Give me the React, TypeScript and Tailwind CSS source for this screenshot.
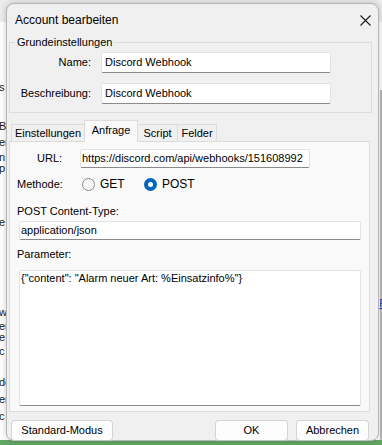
import React from "react";

const bgLetters = [
  { y: 82, t: "s" },
  { y: 121, t: "Bl" },
  { y: 137, t: "er" },
  { y: 152, t: "n" },
  { y: 163, t: "p" },
  { y: 217, t: "e" },
  { y: 307, t: "w" },
  { y: 321, t: "er" },
  { y: 332, t: "e" },
  { y: 346, t: "c" },
  { y: 377, t: "de" },
  { y: 394, t: "er" },
  { y: 411, t: "c" },
];

function Field({ value, className = "" }: { value: string; className?: string }) {
  return (
    <div
      className={`flex items-center bg-white border border-[#e3e3e3] border-b-[#8a8a8a] rounded-[2px] whitespace-nowrap overflow-hidden ${className}`}
    >
      {value}
    </div>
  );
}

function Btn({ label, className = "" }: { label: string; className?: string }) {
  return (
    <div
      className={`h-[21px] flex items-center justify-center bg-[#fdfdfd] border border-[#d3d3d3] border-b-[#c2c2c2] rounded-[4px] ${className}`}
    >
      {label}
    </div>
  );
}

export default function App() {
  const tabs = [
    { label: "Einstellungen", w: "w-[74px]" },
    { label: "Anfrage", w: "w-[54px]", active: true },
    { label: "Script", w: "w-[41px]" },
    { label: "Felder", w: "w-[40px]" },
  ];

  return (
    <div className="relative w-[382px] h-[445px] overflow-hidden bg-white text-[11px] leading-[15px] text-[#000] font-['Liberation_Sans',Arial,sans-serif]">
      {/* background application behind the dialog */}
      <div className="h-[22px] bg-[#ececec]" />
      {bgLetters.map((l, i) => (
        <span key={i} className="absolute left-[-1px] leading-[10px] text-[#1a1a1a]" style={{ top: l.y }}>
          {l.t}
        </span>
      ))}
      <div className="absolute right-0 top-[90px] w-[2px] h-[350px] bg-[#b8b8b8]" />
      <span className="absolute right-[-4px] top-[296px] text-[#1f3fd0] underline">F</span>
      <div className="absolute left-0 bottom-0 w-full h-[5px] bg-[#63a763]" />

      {/* dialog */}
      <div className="absolute left-[6px] top-[3px] w-[373px] h-[438px] rounded-[8px] border border-[#b5b5b5] bg-[#f0f0f0] shadow-[0_0_6px_rgba(0,0,0,0.22)] flex flex-col">
        <div className="h-[31px] shrink-0 flex items-center justify-between pl-[8px] pr-[7px] pt-[1px]">
          <span className="text-[12px]">Account bearbeiten</span>
          <svg width="11" height="11" viewBox="0 0 11 11" className="mt-[1px]">
            <path d="M0.5 0.5L10.5 10.5M10.5 0.5L0.5 10.5" stroke="#1b1b1b" strokeWidth="1.1" fill="none" />
          </svg>
        </div>

        <div className="px-[2px] flex flex-col">
          {/* Grundeinstellungen */}
          <fieldset className="w-[363px] border border-[#dcdcdc] pb-[8px]">
            <legend className="ml-[5px] px-[2px] leading-[15px]">Grundeinstellungen</legend>
            <div className="mt-[2px] grid grid-cols-[81px_230px] gap-x-[10px] gap-y-[10px] items-center">
              <span className="text-right">Name:</span>
              <Field value="Discord Webhook" className="h-[21px] pl-[3px]" />
              <span className="text-right">Beschreibung:</span>
              <Field value="Discord Webhook" className="h-[21px] pl-[3px]" />
            </div>
          </fieldset>

          {/* tabs */}
          <div className="mt-[7px] ml-[2px] flex items-end relative z-10 -mb-[1px]">
            {tabs.map((t, i) => (
              <div
                key={t.label}
                className={`${t.w} ${i > 0 ? "-ml-[1px]" : ""} flex justify-center border border-[#dcdcdc] ${
                  t.active
                    ? "h-[22px] bg-[#f9f9f9] border-b-[#f9f9f9] pt-[2px] relative z-10"
                    : "h-[18px] bg-[#f0f0f0] pt-[1px]"
                }`}
              >
                {t.label}
              </div>
            ))}
          </div>

          {/* tab panel */}
          <div className="w-[361px] h-[271px] border border-[#dcdcdc] bg-[#f9f9f9] flex flex-col pt-[7px]">
            <div className="flex items-center">
              <span className="w-[70px] pl-[27px]">URL:</span>
              <Field value="https://discord.com/api/webhooks/151608992" className="w-[230px] h-[19px] pl-[1px]" />
            </div>

            <div className="mt-[8px] h-[16px] flex items-center">
              <span className="w-[72px] pl-[7px]">Methode:</span>
              <div className="w-[62px] flex items-center gap-[5px]">
                <span className="w-[13px] h-[13px] rounded-full border border-[#8a8a8a] bg-[#f7f7f7]" />
                <span className="text-[12px]">GET</span>
              </div>
              <div className="flex items-center gap-[5px]">
                <span className="w-[13px] h-[13px] rounded-full bg-[#0067c0] flex items-center justify-center">
                  <span className="w-[5px] h-[5px] rounded-full bg-white" />
                </span>
                <span className="text-[12px]">POST</span>
              </div>
            </div>

            <div className="mt-[12px] pl-[7px]">POST Content-Type:</div>
            <Field value="application/json" className="ml-[9px] mt-[2px] w-[342px] h-[19px] pl-[1px]" />

            <div className="mt-[7px] pl-[7px]">Parameter:</div>
            <div className="ml-[9px] mt-[8px] w-[342px] h-[136px] bg-white border border-[#e3e3e3] border-b-[#8a8a8a] rounded-[2px] pl-[1px] whitespace-nowrap">
              {'{"content": "Alarm neuer Art: %Einsatzinfo%"}'}
            </div>
          </div>

          {/* buttons */}
          <div className="mt-[8px] flex items-center">
            <Btn label="Standard-Modus" className="ml-[2px] w-[102px]" />
            <Btn label="OK" className="ml-auto w-[73px]" />
            <Btn label="Abbrechen" className="ml-[8px] mr-[7px] w-[73px]" />
          </div>
        </div>
      </div>
    </div>
  );
}
